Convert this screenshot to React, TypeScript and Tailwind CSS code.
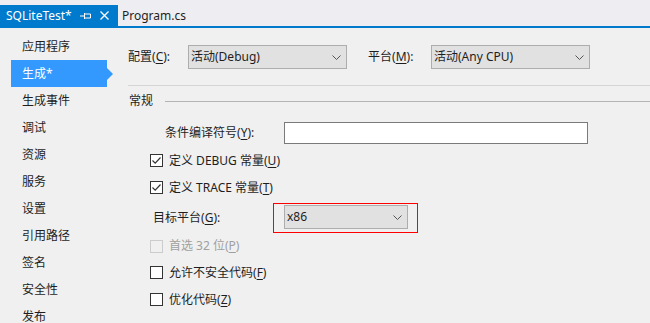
import React from "react";

const font = { fontFamily: '"Noto Sans", "Noto Sans CJK SC", sans-serif' };

const sideItems = [
  "应用程序",
  "生成*",
  "生成事件",
  "调试",
  "资源",
  "服务",
  "设置",
  "引用路径",
  "签名",
  "安全性",
  "发布",
];

function Key({ k }: { k: string }) {
  return (
    <>
      (<span className="underline underline-offset-2">{k}</span>)
    </>
  );
}

function Chevron() {
  return (
    <svg width="9" height="5" viewBox="0 0 9 5" className="shrink-0">
      <path d="M0.5 0.5 L4.5 4.5 L8.5 0.5" fill="none" stroke="#555" strokeWidth="1" />
    </svg>
  );
}

function Combo({ value, w }: { value: string; w: string }) {
  return (
    <div
      className={`${w} h-[24px] flex items-center justify-between bg-[#e1e1e1] border border-[#adadad] pl-[2px] pr-[5px] text-[#1e1e1e]`}
    >
      <span>{value}</span>
      <Chevron />
    </div>
  );
}

function Check({ checked, disabled }: { checked?: boolean; disabled?: boolean }) {
  return (
    <div
      className={`w-[13px] h-[13px] border flex items-center justify-center ${
        disabled ? "border-[#cccccc] bg-[#f0f0f0]" : "border-[#333333] bg-white"
      }`}
    >
      {checked && (
        <svg width="11" height="11" viewBox="0 0 11 11">
          <path d="M1.5 5.5 L4.2 8.2 L9.5 2.5" fill="none" stroke="#333" strokeWidth="1.2" />
        </svg>
      )}
    </div>
  );
}

function CheckRow({
  label,
  k,
  checked,
  disabled,
  h = "h-[27px]",
}: {
  label: string;
  k: string;
  checked?: boolean;
  disabled?: boolean;
  h?: string;
}) {
  return (
    <div className={`${h} flex items-center pl-[37px] gap-[6px] ${disabled ? "text-[#a0a0a0]" : "text-[#1e1e1e]"}`}>
      <Check checked={checked} disabled={disabled} />
      <span>
        {label}
        <Key k={k} />
      </span>
    </div>
  );
}

export default function App() {
  return (
    <div className="w-[650px] h-[323px] overflow-hidden bg-[#f0f0f0] text-[12px] leading-[16px]" style={font}>
      {/* Document tabs */}
      <div className="h-[28px] bg-[#eeeef2] border-b-2 border-[#007acc] flex items-end">
        <div className="h-[21px] w-[118px] bg-[#007acc] text-white flex items-center pl-[6px]">
          <span className="w-[74px]">SQLiteTest*</span>
          <svg width="11" height="8" viewBox="0 0 11 8" className="mr-[9px]">
            <path d="M0 4 H4 M4.5 1 V7 M4.5 2 H10.5 V6 H4.5" fill="none" stroke="white" strokeWidth="1" />
          </svg>
          <svg width="9" height="9" viewBox="0 0 9 9">
            <path d="M0.5 0.5 L8.5 8.5 M8.5 0.5 L0.5 8.5" fill="none" stroke="white" strokeWidth="1.3" />
          </svg>
        </div>
        <div className="h-[21px] flex items-center pl-[4px] text-[#1e1e1e]">Program.cs</div>
      </div>

      <div className="flex">
        {/* Side nav */}
        <div className="w-[113px] shrink-0 pl-[11px] pt-[5px] text-[#1e1e1e]">
          {sideItems.map((item, i) =>
            i === 1 ? (
              <div key={item} className="flex items-center h-[27px]">
                <div className="w-[96px] h-[27px] bg-[#3399ff] text-white flex items-center pl-[11px]">{item}</div>
                <div className="w-0 h-0 border-y-[6px] border-y-transparent border-l-[6px] border-l-[#3399ff]" />
              </div>
            ) : (
              <div key={item} className="h-[27px] flex items-center pl-[11px]">
                {item}
              </div>
            )
          )}
        </div>

        {/* Build page */}
        <div className="flex-1 text-[#1e1e1e]">
          <div className="mt-[17px] flex items-center pl-[15px]">
            <span className="w-[60px]">
              配置<Key k="C" />:
            </span>
            <Combo value="活动(Debug)" w="w-[159px]" />
            <span className="ml-[21px] w-[63px]">
              平台<Key k="M" />:
            </span>
            <Combo value="活动(Any CPU)" w="w-[159px]" />
          </div>

          <div className="mt-[16px] ml-[15px] h-px bg-[#d5d5d5]" />

          <div className="mt-[7px] h-[16px] flex items-center pl-[16px]">
            <span>常规</span>
            <div className="flex-1 ml-[12px] h-px bg-[#b4b4b4]" />
          </div>

          <div className="mt-[13px] flex items-center pl-[52px]">
            <span className="w-[119px]">
              条件编译符号<Key k="Y" />:
            </span>
            <div className="w-[304px] h-[22px] bg-white border border-[#7a7a7a]" />
          </div>

          <div className="mt-[3px]">
            <CheckRow label="定义 DEBUG 常量" k="U" checked />
            <CheckRow label="定义 TRACE 常量" k="T" checked />
          </div>

          <div className="mt-[2px] flex items-center pl-[40px]">
            <span className="w-[120px]">
              目标平台<Key k="G" />:
            </span>
            <div className="border border-[#ff0000] pl-[10px] pr-[9px] pt-px pb-[3px]">
              <Combo value="x86" w="w-[124px]" />
            </div>
          </div>

          <CheckRow label="首选 32 位" k="P" disabled h="h-[26px]" />
          <CheckRow label="允许不安全代码" k="F" />
          <CheckRow label="优化代码" k="Z" />
        </div>
      </div>
    </div>
  );
}
